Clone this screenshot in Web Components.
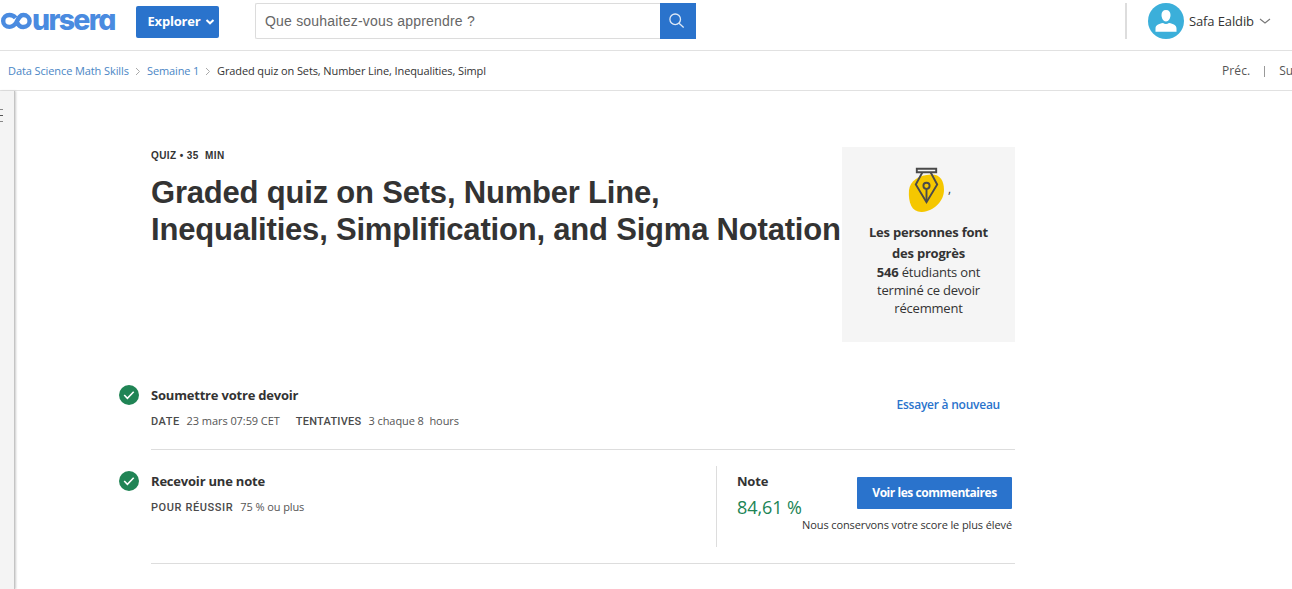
<!DOCTYPE html>
<html lang="fr">
<head>
<meta charset="utf-8">
<title>Coursera</title>
<style>
html,body{margin:0;background:#fff;overflow:hidden}
body{font-family:"Open Sans",sans-serif;color:#333;width:1292px;height:589px}
</style>
</head>
<body>
<course-page></course-page>
<script>
function define(name, html) {
  const t = document.createElement('template');
  t.innerHTML = '<style>*{box-sizing:border-box}:host{display:block}svg{display:block;flex:none}</style>' + html;
  customElements.define(name, class extends HTMLElement {
    constructor() {
      super();
      this.attachShadow({mode: 'open'}).appendChild(t.content.cloneNode(true));
    }
  });
}

define('brand-logo', `
<style>
:host{display:flex;width:136px;height:50px;align-items:flex-start;color:#4a8be0}
svg{margin-top:11px}
span{font:800 28.5px/34px Inter,sans-serif;font-feature-settings:"cv11";letter-spacing:-1.7px;margin:3px 0 0 0;white-space:nowrap}
</style>
<svg width="32" height="20" viewBox="0 0 32 20" fill="none" stroke="currentColor" stroke-width="4.4" role="img" aria-label="co">
<path d="M15.600 6.800C14 4.900 12 4 9.500 4 5.900 4 3.200 6.500 3.200 9.900s2.700 6 6.300 6c3.400 0 5.300-2 7-4.900C18.600 7 19.800 4 23.400 4c3.400 0 6.200 2.600 6.200 6s-2.800 6-6.200 6c-3.200 0-5.200-2-6-4.300"/>
</svg><span>ursera</span>`);

define('explore-button', `
<style>
:host{display:flex;width:83px;height:32px;margin-top:6px;background:#2a73cc;border-radius:2px;color:#fff;padding-left:11.500px;align-items:center;font:700 13px/30px "Open Sans",sans-serif}
span{width:57.500px;white-space:nowrap;letter-spacing:-.2px;margin-top:-2px}
</style>
<span><slot></slot></span><svg width="10" height="8" viewBox="0 0 10 8" fill="none" stroke="#fff" stroke-width="2"><path d="M1.500 2 5 5.300 8.500 2"/></svg>`);

define('search-box', `
<style>
:host{display:flex;width:441px;height:36px;margin:3px 0 0 36px}
.f{flex:1;border:1px solid #dcdcdc;border-right:0;border-radius:2px 0 0 2px;padding-left:9px;font:14px/34px "Liberation Sans",Arial,sans-serif;color:#666;letter-spacing:.2px}
.b{width:36px;background:#2a73cc;display:grid;place-items:center;padding-right:2px}
</style>
<div class="f"><slot></slot></div><div class="b"><svg width="16" height="16" viewBox="0 0 16 16" fill="none" stroke="#dfe9f6" stroke-width="1.300"><circle cx="6.200" cy="6.300" r="5.300"/><path d="m10 10.200 4.700 4.300"/></svg></div>`);

define('user-menu', `
<style>
:host{display:flex;align-items:center;height:36px;margin:3px 0 0 429px;border-left:2px solid #ddd;padding-left:21px;width:167px}
span{font-size:13px;line-height:36px;margin:0 5px 0 5px;white-space:nowrap;letter-spacing:-.12px}
</style>
<svg width="36" height="36" viewBox="0 0 36 36"><circle cx="18" cy="18" r="18" fill="#3bafda"/><path d="M18 7c3.100 0 4.500 2.100 4.500 5 0 3.200-1.800 6.500-4.500 6.500s-4.500-3.300-4.500-6.500c0-2.900 1.400-5 4.500-5ZM7.500 28.700v-3.200c0-3.500 3.200-4.700 7.500-5.500 1.800 1.400 4.200 1.400 6 0 4.300.8 7.500 2 7.500 5.500v3.200Z" fill="#fff"/></svg>
<span><slot></slot></span>
<svg width="12" height="8" viewBox="0 0 12 8" fill="none" stroke="#777" stroke-width="1.100"><path d="m1 2 5 4 5-4"/></svg>`);

define('top-bar', `
<style>:host{display:flex;height:51px;border-bottom:1px solid #e1e1e1;align-items:flex-start}</style>
<brand-logo></brand-logo>
<explore-button>Explorer</explore-button>
<search-box>Que souhaitez-vous apprendre ?</search-box>
<user-menu>Safa Ealdib</user-menu>`);

define('crumb-bar', `
<style>
:host{display:flex;height:40px;border-bottom:1px solid #e1e1e1;align-items:center;padding-left:8px;font-size:11px;line-height:39px;white-space:nowrap;color:#333;overflow:hidden}
a{color:#4a86c5}
.a{width:121px;letter-spacing:-.1px}
.b{width:52px;letter-spacing:-.12px}
.c{letter-spacing:-.11px}
svg{margin:1px 6px 0 6px}
.n{margin-left:auto;width:70px;display:flex;align-items:center;font-size:12px;color:#555;flex:none}
.n .p{width:29px;letter-spacing:.1px}
.n i{width:1px;height:11px;background:#999;margin:1px 14px 0 14px;flex:none}
</style>
<a class="a">Data Science Math Skills</a>
<svg width="6" height="9" viewBox="0 0 6 9" fill="none" stroke="#aaa"><path d="m1 1 3.500 3.500L1 8"/></svg>
<a class="b">Semaine 1</a>
<svg width="6" height="9" viewBox="0 0 6 9" fill="none" stroke="#aaa"><path d="m1 1 3.500 3.500L1 8"/></svg>
<span class="c">Graded quiz on Sets, Number Line, Inequalities, Simpl</span>
<div class="n"><span class="p">Préc.</span><i></i><span>Su</span></div>`);

define('side-rail', `
<style>:host{width:15px;height:498px;background:#f4f4f4;border-right:1px solid #c4c4c4;box-shadow:1px 0 2px #ccc;padding-top:18px}</style>
<svg width="4" height="13" viewBox="0 0 4 13" stroke-width="1"><path d="M0 .5h3M0 12.500h3" stroke="#888"/><path d="M0 6.500h3" stroke="#555"/></svg>`);

define('quiz-heading', `
<style>
:host{width:691px;padding-top:2px}
p{margin:0;font:700 10px/14px "Liberation Sans",Arial,sans-serif;letter-spacing:.4px;white-space:pre}
h1{margin:11px 0 0;font:700 31px/37px "Liberation Sans",Arial,sans-serif;letter-spacing:-.2px;white-space:nowrap}
</style>
<p>QUIZ • 35  MIN</p>
<h1>Graded quiz on Sets, Number Line,<br>Inequalities, Simplification, and Sigma Notation</h1>`);

define('progress-card', `
<style>
:host{width:173px;height:195px;background:#f5f5f5;padding-top:19px;text-align:center;font-size:13px;line-height:18px}
.i{display:flex;height:46px;padding-left:66px}
.i span{font-size:12px;line-height:46px;margin-left:2px}
h2{margin:10px 0 0;font-size:13px;line-height:21px;letter-spacing:-.22px}
p{margin:-1px 0 0;letter-spacing:-.2px}
</style>
<div class="i"><svg width="38" height="48" viewBox="0 0 38 48"><path d="M1 24C2 15 11 9 23 8.500c9-.3 13 6 13 15.500 0 11-10 21-22 22C4 46.500 0 37 1 24Z" fill="#f5c700"/><g fill="none" stroke="#4a4a4a" stroke-width="1.900"><path d="M8.800 2.800h19.400v3.400H8.800Z"/><path d="M14.300 6.500 7.800 18.500l10.700 17.700 10.700-17.700L22.700 6.500"/><circle cx="18.500" cy="19.800" r="3.100"/><path d="M18.500 23v12"/></g></svg><span>,</span></div>
<h2>Les personnes font<br>des progrès</h2>
<p><b>546</b> étudiants ont<br>terminé ce devoir<br>récemment</p>`);

define('task-row', `
<style>
:host{display:flex;border-bottom:1px solid #ddd;margin-left:32px;width:864px}
.c{margin:0 12px 0 -32px}
h3{margin:0;font-size:13px;line-height:20px;letter-spacing:-.2px}
.d{display:flex;margin-top:6px;font-size:11px;line-height:20px;color:#555;white-space:pre}
.e{margin-left:auto}
</style>
<svg class="c" width="20" height="20" viewBox="0 0 20 20"><circle cx="10" cy="10" r="10" fill="#208455"/><path d="m5.200 10 3.200 3.300 6.300-6.500" fill="none" stroke="#fff" stroke-width="1.600"/></svg>
<div><h3><slot name="title"></slot></h3><div class="d"><slot></slot></div></div>
<div class="e"><slot name="end"></slot></div>`);

define('meta-item', `
<style>:host{display:flex;margin-right:16px}b{font:500 11px/20px Roboto,"Liberation Sans",sans-serif;letter-spacing:var(--ks,.5px);margin:1px 7px 0 0;color:#4a4a4a}span{letter-spacing:var(--vs,-.07px)}</style>
<b><slot name="k"></slot></b><span><slot></slot></span>`);

define('grade-panel', `
<style>
:host{display:flex;width:299px;height:81px;margin-top:-5px;border-left:1px solid #ddd;padding-left:20px}
h3{margin:5px 0 0;font-size:13px;line-height:20px;letter-spacing:-.2px}
.g{font-size:18px;line-height:24px;color:#208455;margin-top:4px;white-space:nowrap;letter-spacing:-.1px}
.l{width:65px}
.r{width:210px;display:flex;flex-direction:column;align-items:flex-end}
.b{width:155px;height:32px;margin-top:11px;background:#2a73cc;border-radius:1px;color:#fff;font:700 12px/32px "Open Sans",sans-serif;letter-spacing:-.46px;text-align:center;white-space:nowrap}
.n{font-size:11px;line-height:16px;margin-top:8px;white-space:nowrap;letter-spacing:-.11px}
</style>
<div class="l"><h3>Note</h3><div class="g">84,61 %</div></div>
<div class="r"><div class="b">Voir les commentaires</div><div class="n">Nous conservons votre score le plus élevé</div></div>`);

define('course-page', `
<style>
.m{display:flex}
main{padding:56px 0 0 104px}
.h{display:flex;margin-left:32px}
.t1{margin-top:43px;height:65px}
.t2{margin-top:21px;height:93px}
.k{font-weight:600;font-size:12px;line-height:20px;color:#2a73cc;margin:10px 15px 0 0;white-space:nowrap;letter-spacing:-.24px}
</style>
<top-bar></top-bar>
<crumb-bar></crumb-bar>
<div class="m"><side-rail></side-rail>
<main>
<div class="h"><quiz-heading></quiz-heading><progress-card></progress-card></div>
<task-row class="t1"><span slot="title">Soumettre votre devoir</span>
<meta-item><span slot="k">DATE</span>23 mars 07:59 CET</meta-item><meta-item style="--ks:.25px"><span slot="k">TENTATIVES</span>3 chaque 8  hours</meta-item>
<div slot="end" class="k">Essayer à nouveau</div></task-row>
<task-row class="t2"><span slot="title">Recevoir une note</span>
<meta-item style="--ks:.6px;--vs:-.1px"><span slot="k">POUR RÉUSSIR</span>75 % ou plus</meta-item>
<grade-panel slot="end"></grade-panel></task-row>
</main></div>`);
</script>
</body>
</html>
